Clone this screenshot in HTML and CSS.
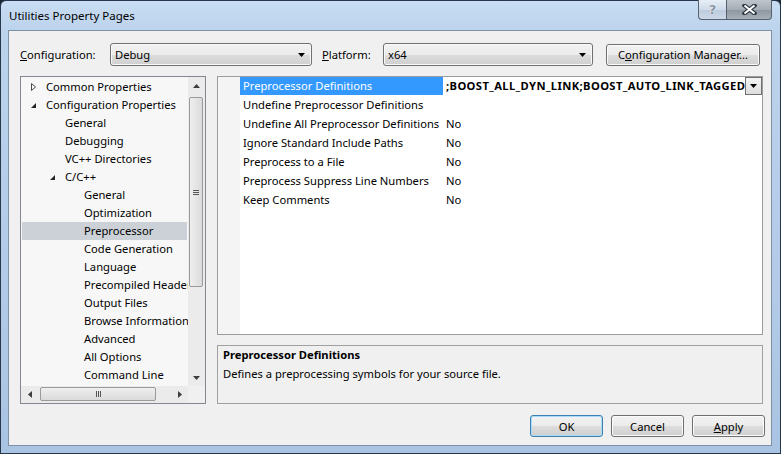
FILE: index.html
```html
<!DOCTYPE html>
<html>
<head>
<meta charset="utf-8">
<link rel="stylesheet" href="styles.css">
</head>
<body>
<div class="window">
  <div class="titlebar">
    <div class="title">Utilities Property Pages</div>
    <div class="caption">
      <div class="cap help"><span>?</span></div>
      <div class="cap close">
        <svg width="15" height="11" viewBox="0 0 15 11"><path d="M2.5 1.5L12.5 9.5M12.5 1.5L2.5 9.5" stroke="#2f3944" stroke-width="4.2" stroke-linecap="square"/><path d="M2.5 1.5L12.5 9.5M12.5 1.5L2.5 9.5" stroke="#ffffff" stroke-width="2"/></svg>
      </div>
    </div>
  </div>
  <div class="client">
    <div class="toprow">
      <span class="lbl lbl-cfg"><u>C</u>onfiguration:</span>
      <div class="combo combo-cfg"><span class="ctext">Debug</span><svg class="dd" width="7" height="4" viewBox="0 0 7 4"><path d="M0 0H7L3.5 4Z" fill="#000"/></svg></div>
      <span class="lbl lbl-plat"><u>P</u>latform:</span>
      <div class="combo combo-plat"><span class="ctext">x64</span><svg class="dd" width="7" height="4" viewBox="0 0 7 4"><path d="M0 0H7L3.5 4Z" fill="#000"/></svg></div>
      <div class="btn btn-mgr">C<u>o</u>nfiguration Manager...</div>
    </div>
    <div class="main">
      <div class="tree">
        <div class="tree-top">
          <div class="tree-items">
            <div class="ti l0"><span class="exp"><svg width="7" height="10" viewBox="0 0 7 10"><path d="M1.5 1.5L5.5 5L1.5 8.5Z" fill="none" stroke="#4a4a4a" stroke-width="1"/></svg></span>Common Properties</div>
            <div class="ti l0"><span class="exp"><svg width="7" height="10" viewBox="0 0 7 10"><path d="M6 3V8H1Z" fill="#262626"/></svg></span>Configuration Properties</div>
            <div class="ti l1">General</div>
            <div class="ti l1">Debugging</div>
            <div class="ti l1">VC++ Directories</div>
            <div class="ti l1"><span class="exp"><svg width="7" height="10" viewBox="0 0 7 10"><path d="M6 3V8H1Z" fill="#262626"/></svg></span>C/C++</div>
            <div class="ti l2">General</div>
            <div class="ti l2">Optimization</div>
            <div class="ti l2 tsel">Preprocessor</div>
            <div class="ti l2">Code Generation</div>
            <div class="ti l2">Language</div>
            <div class="ti l2">Precompiled Headers</div>
            <div class="ti l2">Output Files</div>
            <div class="ti l2">Browse Information</div>
            <div class="ti l2">Advanced</div>
            <div class="ti l2">All Options</div>
            <div class="ti l2">Command Line</div>
          </div>
          <div class="vscroll">
            <div class="sb-btn"><svg width="7" height="4" viewBox="0 0 7 4"><path d="M0 4H7L3.5 0Z" fill="#3d3d3d"/></svg></div>
            <div class="vthumb"><svg width="6" height="5" viewBox="0 0 6 5"><path d="M0 0.5H6M0 2.5H6M0 4.5H6" stroke="#555" stroke-width="1"/></svg></div>
            <div class="vtrack"></div>
            <div class="sb-btn"><svg width="7" height="4" viewBox="0 0 7 4"><path d="M0 0H7L3.5 4Z" fill="#3d3d3d"/></svg></div>
          </div>
        </div>
        <div class="hscroll-row">
          <div class="hscroll">
            <div class="sb-btn h"><svg width="4" height="7" viewBox="0 0 4 7"><path d="M4 0V7L0 3.5Z" fill="#3d3d3d"/></svg></div>
            <div class="hthumb"><svg width="5" height="6" viewBox="0 0 5 6"><path d="M0.5 0V6M2.5 0V6M4.5 0V6" stroke="#555" stroke-width="1"/></svg></div>
            <div class="htrack"></div>
            <div class="sb-btn h"><svg width="4" height="7" viewBox="0 0 4 7"><path d="M0 0V7L4 3.5Z" fill="#3d3d3d"/></svg></div>
          </div>
          <div class="corner"></div>
        </div>
      </div>
      <div class="right">
        <div class="grid">
          <div class="row sel"><div class="gut"></div><div class="name">Preprocessor Definitions</div><div class="val strong"><span class="vtext">;BOOST_ALL_DYN_LINK;BOOST_AUTO_LINK_TAGGED</span><div class="ddbtn"><svg width="7" height="4" viewBox="0 0 7 4"><path d="M0 0H7L3.5 4Z" fill="#000"/></svg></div></div></div>
          <div class="row"><div class="gut"></div><div class="name">Undefine Preprocessor Definitions</div><div class="val"></div></div>
          <div class="row"><div class="gut"></div><div class="name">Undefine All Preprocessor Definitions</div><div class="val">No</div></div>
          <div class="row"><div class="gut"></div><div class="name">Ignore Standard Include Paths</div><div class="val">No</div></div>
          <div class="row"><div class="gut"></div><div class="name">Preprocess to a File</div><div class="val">No</div></div>
          <div class="row"><div class="gut"></div><div class="name">Preprocess Suppress Line Numbers</div><div class="val">No</div></div>
          <div class="row"><div class="gut"></div><div class="name">Keep Comments</div><div class="val">No</div></div>
        </div>
        <div class="desc">
          <div class="desc-title">Preprocessor Definitions</div>
          <div class="desc-text">Defines a preprocessing symbols for your source file.</div>
        </div>
      </div>
    </div>
    <div class="buttons">
      <div class="btn btn-def">OK</div>
      <div class="btn">Cancel</div>
      <div class="btn"><u>A</u>pply</div>
    </div>
  </div>
</div>
</body>
</html>
```
FILE: styles.css
```css
* { box-sizing: border-box; }
html, body { margin: 0; padding: 0; }
body {
  width: 781px;
  height: 454px;
  overflow: hidden;
  background: #1d2733;
  font-family: "Noto Sans", "Open Sans", sans-serif;
  font-size: 11.2px;
  color: #000;
}
.window {
  width: 781px;
  height: 454px;
  border: 1px solid #27384a;
  border-radius: 6px 6px 0 0;
  background: linear-gradient(to bottom, #c8ddf3 0, #bcd3ec 30px, #b3cbe8 60%, #a9c3e2 100%);
  padding: 0 8px 7px 7px;
  display: flex;
  flex-direction: column;
}
.titlebar {
  height: 29px;
  flex: none;
  display: flex;
  justify-content: space-between;
  align-items: flex-start;
}
.title {
  padding-top: 7px;
  margin-left: 1px;
  line-height: 15px;
  font-size: 11.5px;
  color: #000;
}
.caption {
  display: flex;
  margin-top: -1px;
  margin-right: 0;
}
.cap {
  height: 20px;
  border: 1px solid #56616e;
  border-top: none;
  display: flex;
  align-items: center;
  justify-content: center;
}
.help {
  width: 28px;
  border-right: none;
  border-radius: 0 0 0 4px;
  background: linear-gradient(#e7eef6, #cfdbe9 50%, #bccbdd 51%, #cbd8e8);
}
.help span {
  font-family: "DejaVu Sans", sans-serif;
  font-weight: bold;
  font-size: 13px;
  color: #8a96a4;
  text-shadow: 0 0 1px #fff, 0 0 1px #fff;
}
.close {
  width: 46px;
  border-radius: 0 0 4px 0;
  background: linear-gradient(#bfc5cc, #a6adb6 50%, #8d96a0 51%, #a7afb8);
}
.client {
  flex: 1;
  background: #f0f0f0;
  border: 1px solid #7f91a5;
  display: flex;
  flex-direction: column;
}
.toprow {
  display: flex;
  align-items: center;
  height: 23px;
  margin-top: 12px;
  padding-left: 11px;
  flex: none;
}
.lbl { display: inline-block; white-space: nowrap; }
.lbl-cfg { width: 90px; }
.lbl-plat { width: 61px; margin-left: 10px; }
.combo {
  height: 23px;
  border: 1px solid #707070;
  border-radius: 3px;
  background: linear-gradient(#f2f2f2, #ebebeb 50%, #dddddd 51%, #cfcfcf);
  box-shadow: inset 0 0 0 1px #fafafa;
  display: flex;
  align-items: center;
  padding-left: 4px;
}
.combo .ctext { flex: 1; }
.combo .dd { margin-right: 6px; }
.combo-cfg { width: 202px; }
.combo-plat { width: 210px; }
.btn {
  width: 73px;
  height: 22px;
  border: 1px solid #707070;
  border-radius: 3px;
  background: linear-gradient(#f2f2f2, #ebebeb 50%, #dddddd 51%, #cfcfcf);
  box-shadow: inset 0 0 0 1px #fbfbfb;
  display: flex;
  align-items: center;
  justify-content: center;
  white-space: nowrap;
}
.btn-mgr { width: 154px; margin-left: 13px; }
.btn-def {
  border-color: #3c7fb1;
  box-shadow: inset 0 0 0 1px #a8dcf8;
}
.main {
  display: flex;
  gap: 11px;
  height: 328px;
  margin: 10px 9px 0 11px;
  flex: none;
}
.tree {
  width: 186px;
  border: 1px solid #828790;
  background: #f7f7f7;
  display: flex;
  flex-direction: column;
}
.tree-top { flex: 1; display: flex; min-height: 0; }
.tree-items {
  flex: 1;
  overflow: hidden;
  padding-top: 1px;
}
.ti {
  height: 18px;
  line-height: 18px;
  white-space: nowrap;
  overflow: hidden;
  display: flex;
  align-items: center;
}
.ti.l0 { padding-left: 25px; }
.ti.l1 { padding-left: 44px; }
.ti.l2 { padding-left: 63px; }
.ti.tsel { background: #ccd1d7; margin: 0 1px; padding-left: 62px; }
.exp {
  width: 16px;
  margin-left: -16px;
  height: 18px;
  display: flex;
  align-items: center;
  flex: none;
}
.vscroll {
  width: 17px;
  display: flex;
  flex-direction: column;
  background: #ebebeb;
}
.sb-btn {
  height: 17px;
  flex: none;
  display: flex;
  align-items: center;
  justify-content: center;
}
.sb-btn.h { width: 17px; }
.vthumb {
  flex: none;
  height: 190px;
  margin: 3px 2px 0 1px;
  border: 1px solid #9a9a9a;
  border-radius: 2px;
  background: linear-gradient(to right, #efefef, #dadada);
  display: flex;
  align-items: center;
  justify-content: center;
}
.vtrack { flex: 1; }
.hscroll-row { height: 17px; flex: none; display: flex; }
.hscroll { flex: 1; display: flex; background: #ebebeb; }
.hthumb {
  flex: none;
  width: 116px;
  margin: 1px 0 2px 2px;
  border: 1px solid #9a9a9a;
  border-radius: 2px;
  background: linear-gradient(#efefef, #dadada);
  display: flex;
  align-items: center;
  justify-content: center;
}
.htrack { flex: 1; }
.corner { width: 17px; background: #f0f0f0; }
.right {
  flex: 1;
  display: flex;
  flex-direction: column;
  gap: 10px;
}
.grid {
  height: 259px;
  flex: none;
  border: 1px solid #9c9c9c;
  background: linear-gradient(to right, #f4f4f4 22px, #ffffff 22px);
  overflow: hidden;
}
.row {
  display: flex;
  height: 19px;
  line-height: 18px;
  white-space: nowrap;
}
.gut { width: 22px; flex: none; }
.name {
  width: 203px;
  flex: none;
  height: 18px;
  padding-left: 3px;
  overflow: hidden;
}
.row.sel .name { background: #3399ff; color: #fff; }
.val {
  flex: 1;
  margin-left: 1px;
  padding-left: 2px;
  display: flex;
  min-width: 0;
  height: 18px;
}
.val.strong { font-weight: bold; }
.vtext { flex: 1; overflow: hidden; min-width: 0; letter-spacing: 0.38px; }
.ddbtn {
  width: 17px;
  height: 18px;
  flex: none;
  border: 1px solid #6f6f6f;
  background: linear-gradient(#f4f4f4, #dedede);
  display: flex;
  align-items: center;
  justify-content: center;
}
.desc {
  height: 59px;
  flex: none;
  border: 1px solid #a0a0a0;
  background: #f0f0f0;
  padding: 0 5px;
}
.desc-title { font-weight: bold; line-height: 18px; }
.desc-text { line-height: 19px; }
.buttons {
  display: flex;
  justify-content: flex-end;
  gap: 8px;
  margin: 11px 6px 0 0;
  flex: none;
}
```
